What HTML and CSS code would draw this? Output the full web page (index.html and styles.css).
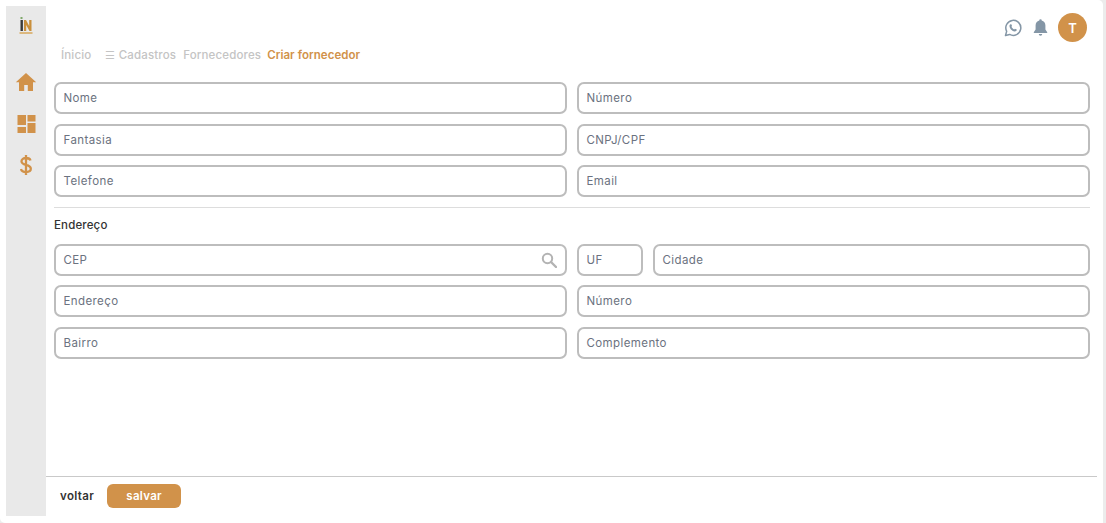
FILE: index.html
```html
<!DOCTYPE html>
<html lang="pt-BR">
<head>
<meta charset="utf-8">
<title>Criar fornecedor</title>
<link rel="stylesheet" href="styles.css">
</head>
<body>
<div class="shell">
<div class="app">
  <aside class="sidebar">
    <svg class="logo" viewBox="0 0 16 20" width="16" height="20">
      <rect x="2.500" y="1" width="2" height="2" fill="#7fa86a"/>
      <rect x="2.500" y="4" width="2.400" height="11" fill="#3a3a3a"/>
      <path d="M6 15V4h2l3.200 6V4H13.500v11h-2L8.200 9v6z" fill="#c98f3c"/>
      <rect x="1.500" y="16" width="13" height="2" fill="#dcb87f"/>
    </svg>
    <nav class="side-nav">
      <svg viewBox="0 0 24 24" width="24" height="24"><path d="M12 3 1.800 12.200H5V21h5.200v-6h3.600v6H19v-8.800h3.200z" fill="#d1924a"/></svg>
      <svg viewBox="0 0 20 20" width="20" height="20"><path d="M1.500 1h8.500v10H1.500zM11.500 1h8v6.500h-8zM11.500 9h8v10h-8zM1.500 13h8.500v6H1.500z" fill="#d1924a"/></svg>
      <svg viewBox="1 0 12 22" width="12" height="22"><path d="M7 1v20M11.500 6.500C11 4.800 9.300 4 7 4 4.500 4 2.500 5.200 2.500 7.300c0 2 1.700 2.900 4.500 3.600 3 .7 4.800 1.700 4.800 3.900S9.700 18 7 18c-2.600 0-4.600-1-5-3" fill="none" stroke="#d1924a" stroke-width="2.300"/></svg>
    </nav>
  </aside>
  <main class="main">
    <header class="topbar">
      <svg viewBox="0 0 24 24" width="20" height="20"><path d="M3 21l1.400-5A9 9 0 1 1 8 19.700z" fill="none" stroke="#8496a6" stroke-width="1.800" stroke-linejoin="round"/><path d="M9 7.500c-.8.300-1.300 1.200-1.200 2.300.3 3 3.200 5.900 6.200 6.300 1.200.1 2.100-.4 2.400-1.300l.1-1-2.200-1-.9 1c-1.300-.5-2.700-1.800-3.300-3.200l.8-.9-.9-2.200z" fill="#8496a6"/></svg>
      <svg viewBox="0 0 24 24" width="19" height="19"><path d="M12 1.500a1.500 1.500 0 0 0-1.500 1.700C7.500 4 5.800 6.500 5.800 9.500v5L3.500 18v1h17v-1l-2.300-3.500v-5c0-3-1.700-5.500-4.700-6.300A1.500 1.500 0 0 0 12 1.500zM9.800 20.300a2.200 2.200 0 0 0 4.400 0z" fill="#8496a6"/></svg>
      <div class="avatar">T</div>
    </header>
    <nav class="crumbs">
      <span class="crumb home">Ínicio</span>
      <span class="crumb"><span class="burger">☰</span> Cadastros</span>
      <span class="crumb">Fornecedores</span>
      <span class="crumb active">Criar fornecedor</span>
    </nav>
    <section class="form">
      <div class="grid">
        <div class="field">Nome</div>
        <div class="field">Número</div>
        <div class="field">Fantasia</div>
        <div class="field">CNPJ/CPF</div>
        <div class="field">Telefone</div>
        <div class="field">Email</div>
      </div>
      <hr class="rule">
      <h2 class="title">Endereço</h2>
      <div class="grid">
        <div class="field search">CEP
          <svg viewBox="0 0 16 16" width="16" height="16"><circle cx="6.500" cy="6.500" r="4.700" fill="none" stroke="#b3b3b3" stroke-width="2"/><path d="m10 10 5 5" stroke="#b3b3b3" stroke-width="2.400" stroke-linecap="round"/></svg>
        </div>
        <div class="split">
          <div class="field uf">UF</div>
          <div class="field city">Cidade</div>
        </div>
        <div class="field">Endereço</div>
        <div class="field">Número</div>
        <div class="field">Bairro</div>
        <div class="field">Complemento</div>
      </div>
    </section>
    <footer class="footer">
      <span class="back">voltar</span>
      <button class="save" type="button">salvar</button>
    </footer>
  </main>
</div>
</div>
</body>
</html>
```

FILE: styles.css
```css
* { box-sizing: border-box; }
html, body { margin: 0; height: 100%; }
body {
  background: #ececec;
  font-family: "Inter", "Noto Sans", sans-serif;
  color: #555;
  overflow: hidden;
}
.shell {
  width: 1103px;
  height: 523px;
  padding: 6px 0 0 6px;
  background: #fff;
  border-radius: 0 5px 0 5px;
}
.app {
  display: flex;
  width: 1091px;
  height: 510px;
}
.sidebar {
  width: 40px;
  flex: none;
  background: #e9e9e9;
  display: flex;
  flex-direction: column;
  align-items: center;
  padding-top: 10px;
}
.side-nav {
  display: flex;
  flex-direction: column;
  align-items: center;
  gap: 20px;
  margin-top: 34px;
}
.main {
  flex: 1;
  display: flex;
  flex-direction: column;
  min-width: 0;
}
.topbar {
  height: 36px;
  padding: 7px 10px 0 0;
  display: flex;
  justify-content: flex-end;
  align-items: center;
  gap: 8px;
}
.avatar {
  width: 29px;
  height: 29px;
  border-radius: 50%;
  background: #d1924a;
  color: #fff;
  font-weight: 600;
  font-size: 13px;
  display: flex;
  align-items: center;
  justify-content: center;
}
.crumbs {
  display: flex;
  gap: 7px;
  padding-left: 15px;
  height: 40px;
  align-items: flex-start;
  padding-top: 6px;
  font-size: 11.500px;
  font-weight: 500;
  letter-spacing: .15px;
  color: #c4c4c4;
}
.home { margin-right: 7px; }
.burger { font-size: 11px; }
.crumb.active { color: #d1924a; font-weight: 600; letter-spacing: .05px; margin-left: -1px; }
.form {
  flex: 1;
  padding: 0 7px 0 8px;
}
.grid {
  display: grid;
  grid-template-columns: 513px 513px;
  gap: 9.500px 10px;
}
.field {
  height: 32px;
  border: 2px solid #bdbdbd;
  border-radius: 7px;
  padding: 0 8px 0 7.500px;
  display: flex;
  align-items: center;
  justify-content: space-between;
  font-size: 11.500px;
  letter-spacing: .4px;
  color: #6b7280;
  background: #fff;
}
.split { display: flex; gap: 10px; }
.uf { width: 66px; flex: none; }
.city { flex: 1; }
.rule {
  border: 0;
  border-top: 1px solid #ddd;
  margin: 10px 0 0;
}
.title {
  margin: 10px 0 11.500px;
  font-size: 11.500px;
  line-height: 14px;
  font-weight: 500;
  letter-spacing: .15px;
  color: #333;
}
.footer {
  height: 40px;
  border-top: 1px solid #c9c9c9;
  display: flex;
  align-items: flex-start;
  gap: 13px;
  padding: 7px 0 0 14px;
}
.back {
  font-size: 11.500px;
  font-weight: 600;
  letter-spacing: .35px;
  color: #333;
  line-height: 24px;
}
.save {
  width: 74px;
  height: 24px;
  border: 0;
  border-radius: 6px;
  background: #d1924a;
  color: #fff;
  font: 600 11.500px "Inter", sans-serif;
  letter-spacing: .3px;
}
```
